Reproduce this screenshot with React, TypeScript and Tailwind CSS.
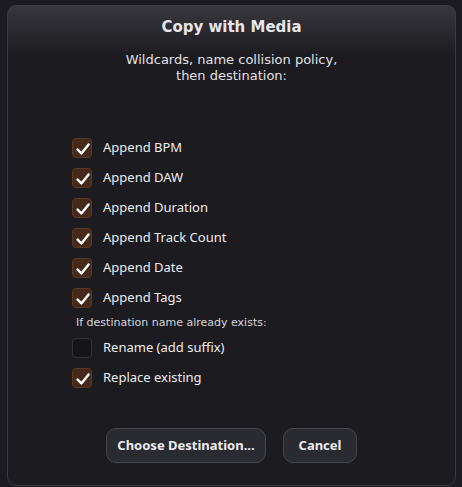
import { useState } from "react";

const options = [
  { key: "bpm", label: "Append BPM" },
  { key: "daw", label: "Append DAW" },
  { key: "duration", label: "Append Duration" },
  { key: "tracks", label: "Append Track Count" },
  { key: "date", label: "Append Date" },
  { key: "tags", label: "Append Tags" },
];

function Check({ checked, onChange, label }: { checked: boolean; onChange: () => void; label: string }) {
  return (
    <button type="button" onClick={onChange} className="flex h-[30px] items-center gap-[11px] text-left">
      <span
        className={
          checked
            ? "grid h-5 w-5 place-items-center rounded-[4px] border border-[#5a3826] bg-[#45291b]"
            : "grid h-5 w-5 place-items-center rounded-[4px] border border-[#34333a] bg-[#151419]"
        }
      >
        {checked && (
          <svg viewBox="0 0 20 20" className="h-5 w-5">
            <path d="M4.6 10.6 L8.4 14.4 L15.6 5.4" fill="none" stroke="#fff" strokeWidth="2.4" strokeLinecap="round" strokeLinejoin="round" />
          </svg>
        )}
      </span>
      <span className="text-[13px] text-[#ededf0]">{label}</span>
    </button>
  );
}

export default function App() {
  const [flags, setFlags] = useState<Record<string, boolean>>({
    bpm: true, daw: true, duration: true, tracks: true, date: true, tags: true,
  });
  const [policy, setPolicy] = useState<"rename" | "replace">("replace");

  return (
    <div className="h-[487px] w-[462px] overflow-hidden bg-[#1c1b21] pt-[5px] pl-[7px] font-['Noto_Sans','Open_Sans',sans-serif]">
      <div className="flex h-[481px] w-[449px] flex-col rounded-[9px] border border-[#3b3a41] bg-[#1c1b20] bg-[linear-gradient(to_bottom,#38373d_0px,#1c1b20_50px)]">
        <h1 className="mt-[11px] text-center font-['DejaVu_Sans',sans-serif] text-[15px] font-bold leading-5 text-[#e6e6ea]">
          Copy with Media
        </h1>
        <p className="mt-[15px] text-center font-['DejaVu_Sans',sans-serif] text-[13px] leading-4 text-[#e2e2e6]">
          Wildcards, name collision policy,
          <br />
          then destination:
        </p>

        <div className="mt-[49px] flex flex-col pl-[64px]">
          {options.map((o) => (
            <Check
              key={o.key}
              label={o.label}
              checked={flags[o.key]}
              onChange={() => setFlags({ ...flags, [o.key]: !flags[o.key] })}
            />
          ))}
          <div className="flex h-5 items-center pl-1 font-['DejaVu_Sans',sans-serif] text-[11px] text-[#d6d6da]">
            If destination name already exists:
          </div>
          <Check label="Rename (add suffix)" checked={policy === "rename"} onChange={() => setPolicy("rename")} />
          <Check label="Replace existing" checked={policy === "replace"} onChange={() => setPolicy("replace")} />
        </div>

        <div className="mt-[35px] flex justify-center gap-[17px]">
          <button className="h-[35px] w-[160px] rounded-[10px] border border-[#47464d] bg-[#2a2a31] text-[13px] font-bold text-[#ececf0]">
            Choose Destination...
          </button>
          <button className="h-[35px] w-[74px] rounded-[10px] border border-[#47464d] bg-[#2a2a31] text-[13px] font-bold text-[#ececf0]">
            Cancel
          </button>
        </div>
      </div>
    </div>
  );
}
